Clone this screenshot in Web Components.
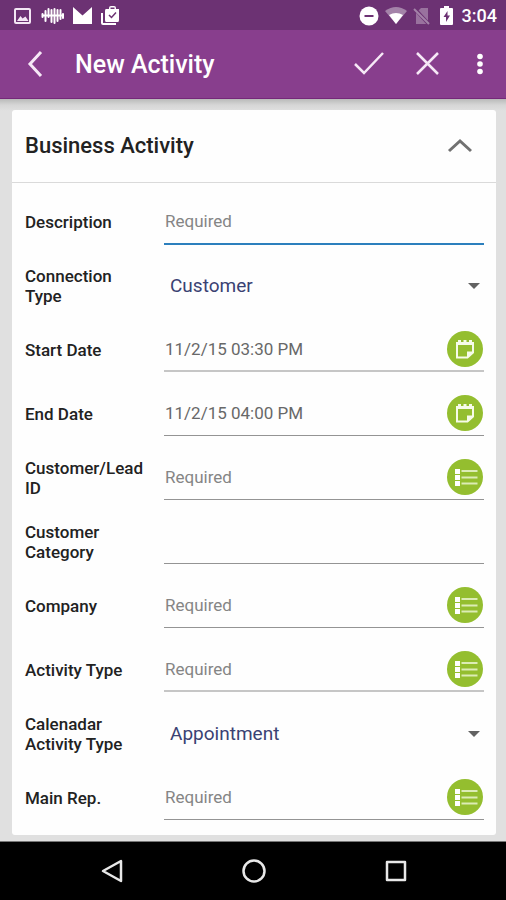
<!DOCTYPE html>
<html lang="en">
<head>
<meta charset="utf-8">
<meta name="viewport" content="width=device-width, initial-scale=1">
<title>New Activity</title>
<style>
  html, body { margin: 0; min-height: 100%; }
  body { background: #e0e0e0; font-family: Roboto, "Liberation Sans", sans-serif; }
</style>
</head>
<body>
<activity-screen>
  <status-bar slot="top">3:04</status-bar>
  <app-bar slot="top">New Activity</app-bar>
  <form-card heading="Business Activity">
    <form-field placeholder="Required" line="active">Description</form-field>
    <select-field value="Customer">Connection Type</select-field>
    <form-field value="11/2/15 03:30 PM" icon="date" line="soft">Start Date</form-field>
    <form-field value="11/2/15 04:00 PM" icon="date">End Date</form-field>
    <form-field placeholder="Required" icon="list">Customer/Lead ID</form-field>
    <form-field>Customer Category</form-field>
    <form-field placeholder="Required" icon="list">Company</form-field>
    <form-field placeholder="Required" icon="list" line="soft">Activity Type</form-field>
    <select-field value="Appointment">Calenadar Activity Type</select-field>
    <form-field placeholder="Required" icon="list">Main Rep.</form-field>
  </form-card>
  <nav-bar slot="bottom"></nav-bar>
</activity-screen>

<script>
class Base extends HTMLElement {
  connectedCallback() {
    if (!this.shadowRoot) this.attachShadow({ mode: "open" }).innerHTML =
      `<style>:host,*{box-sizing:border-box} svg{display:block} button{border:0;padding:0;margin:0;background:none;color:inherit;font:inherit;cursor:pointer;display:grid;place-items:center}</style>` + this.render();
  }
}

customElements.define("activity-screen", class extends Base {
  render() { return `
    <style>
      :host { display: flex; flex-direction: column; min-height: 100vh; }
      main { flex: 1; padding: 11px 10px 6px 12px; background: linear-gradient(#b9bab9, #d6d6d6 6px, #e0e0e0 12px); }
    </style>
    <slot name="top"></slot><main><slot></slot></main><slot name="bottom"></slot>`; }
});

customElements.define("status-bar", class extends Base {
  render() { return `
    <style>
      :host { display: flex; align-items: center; justify-content: space-between; height: 30px; padding: 2px 9px 0 12px; background: #6c3273; color: #fff; font-size: 18px; font-weight: 500; line-height: 28px; }
      div { display: flex; align-items: center; }
      .left { gap: 8px; } .right { gap: 6px; }
    </style>
    <div class="left">
      <svg width="21" height="20" viewBox="0 0 21 20" aria-hidden="true"><rect x="3" y="3" width="15" height="14" rx="1" fill="none" stroke="#f3e6f4" stroke-width="2"/><path d="M5 15l3.500-5 2 2.500 3-2 3 4.500z" fill="#f3e6f4"/></svg>
      <svg width="24" height="20" viewBox="0 0 24 20" aria-hidden="true" stroke="#fff" stroke-linecap="round"><path d="M1.500 8v3M4.500 5v10M7.500 3v8M10.500 4v12M13.500 3v14M16.500 4v11M19.500 4v9M22 8v4" stroke-width="2"/><path d="M2 9.500h20" stroke-width="2"/></svg>
      <svg width="19" height="20" viewBox="0 0 19 20" aria-hidden="true"><path d="M0 1l9.500 8.500L19 1v17H0z" fill="#fff"/></svg>
      <svg width="24" height="20" viewBox="0 0 24 20" aria-hidden="true"><path d="M1 7h2v10h13v2H3q-2 0-2-2z" fill="#fff"/><path d="M6 3h3V2q0-2 2-2h3q2 0 2 2v1h3v11q0 2-1 2H6q-1 0-1-2V5q0-2 1-2zM10.500 3h4V1.500h-4z" fill="#fff" fill-rule="evenodd"/><path d="M9 9l2.500 2.500 4.500-5" fill="none" stroke="#6c3273" stroke-width="1.500"/></svg>
    </div>
    <div class="right">
      <svg width="20" height="20" viewBox="0 0 20 20" aria-hidden="true"><circle cx="10" cy="10" r="9.500" fill="#fff"/><path d="M5.500 10h9" stroke="#6c3273" stroke-width="2"/></svg>
      <svg width="22" height="20" viewBox="0 0 22 20" aria-hidden="true"><path d="M0 5q11-8 22 0L11 18z" fill="#a483a9"/><path d="M4 9q7-4 14 0L11 18z" fill="#fff"/></svg>
      <svg width="18" height="20" viewBox="0 0 18 20" aria-hidden="true"><path d="M3 7l5-5h7v16H3z" fill="#99729e"/><path d="M1 2l15.500 17" stroke="#6c3273" stroke-width="3.500"/><path d="M1 3l15 15" stroke="#a483a9" stroke-width="2"/></svg>
      <svg width="19" height="20" viewBox="0 0 19 20" aria-hidden="true"><path d="M7 0h5v2h3q1 0 1 1v15q0 1-1 1H4q-1 0-1-1V3q0-1 1-1h3z" fill="#fff"/><path d="M10.500 5L6.500 11h2.500v5l4-6.500h-2.500z" fill="#6c3273"/></svg>
      <span><slot></slot></span>
    </div>`; }
});

customElements.define("app-bar", class extends Base {
  render() { return `
    <style>
      :host { display: flex; align-items: center; height: 69px; padding: 2px 6px 0 16px; background: #883e8d; border-bottom: 1px solid #752879; color: #fff; }
      h1 { flex: 1; margin: 0 0 0 19px; font-size: 25px; line-height: 32px; font-weight: 500; }
      button { width: 40px; height: 40px; }
      .actions { display: flex; gap: 19px; }
      .actions button:last-child { margin-left: -7px; }
    </style>
    <button aria-label="Back"><svg width="40" height="40" viewBox="0 0 40 40" fill="none" stroke="#f6e8f6" stroke-width="3"><path d="M25 7L14 19l11 12"/></svg></button>
    <h1><slot></slot></h1>
    <div class="actions">
      <button aria-label="Save"><svg width="40" height="40" viewBox="0 0 40 40" fill="none" stroke="#f6e8f6" stroke-width="2.500"><path d="M6 19l9 9 19-20"/></svg></button>
      <button aria-label="Cancel"><svg width="40" height="40" viewBox="0 0 40 40" fill="none" stroke="#f6e8f6" stroke-width="2.500"><path d="M9 8l21 21M30 8L9 29"/></svg></button>
      <button aria-label="More options"><svg width="40" height="40" viewBox="0 0 40 40" fill="#fff"><circle cx="20" cy="11.500" r="2.800"/><circle cx="20" cy="19" r="2.800"/><circle cx="20" cy="26.500" r="2.800"/></svg></button>
    </div>`; }
});

customElements.define("form-card", class extends Base {
  render() { return `
    <style>
      :host { display: block; background: #fefefe; border-radius: 3px; padding-bottom: 5px; }
      header { display: flex; align-items: center; justify-content: space-between; height: 73px; padding: 0 16px 0 13px; border-bottom: 1px solid #dadada; }
      h2 { margin: 0; font-size: 22px; line-height: 28px; font-weight: 500; color: #222; }
      button { width: 40px; height: 40px; }
      form { padding: 7px 12px 0 13px; }
    </style>
    <header><h2>${this.getAttribute("heading")}</h2>
      <button aria-label="Collapse section" aria-expanded="true"><svg width="40" height="40" viewBox="0 0 40 40" fill="none" stroke="#717171" stroke-width="3"><path d="M9 25l11-10 11 10"/></svg></button>
    </header>
    <form><slot></slot></form>`; }
});

const rowStyle = `
  :host { display: grid; grid-template-columns: 139px minmax(0, 1fr); min-height: 64px; }
  label { align-self: center; padding-right: 16px; font-size: 17px; line-height: 20px; font-weight: 500; color: #222; }
  .field { display: grid; align-items: start; padding-top: 9px; }
  .field > * { grid-area: 1 / 1; }`;

const icons = {
  date: `<svg width="36" height="36" viewBox="0 0 36 36"><path d="M10 12v14.500h10.500l5.500-5V12z" fill="none" stroke="#f6fbe9" stroke-width="2"/><path d="M9 11h18v3H9zM11 9h3v3h-3zM16.500 9h3v3h-3zM22 9h3v3h-3zM20 27v-6.500h7z" fill="#f6fbe9"/></svg>`,
  list: `<svg width="36" height="36" viewBox="0 0 36 36"><path d="M8 10h5v5H8zM8 16h5v5H8zM8 22h5v5H8z" fill="#fff"/><path d="M14.500 12h16M14.500 18.500h16M14.500 24.500h16" stroke="#dcecb5" stroke-width="2"/></svg>`
};

customElements.define("form-field", class extends Base {
  render() {
    const icon = this.getAttribute("icon");
    return `
    <style>${rowStyle}
      input { width: 100%; height: 45px; margin: 0; padding: 0 40px 0 1px; border: 0; border-bottom: 1px solid #949494; border-radius: 0; outline: 0; background: none; font: 400 17px/24px Roboto, "Liberation Sans", sans-serif; color: #686868; }
      input::placeholder { color: #858585; opacity: 1; }
      :host([line="soft"]) input { border-bottom: 2px solid #c6c6c6; }
      :host([line="active"]) input { height: 46px; border-bottom: 2px solid #2c7fbd; }
      button { justify-self: end; width: 36px; height: 36px; margin: 4px 1px 0 0; border-radius: 50%; background: #94be2f; }
    </style>
    <label for="f"><slot></slot></label>
    <div class="field">
      <input id="f" type="text" value="${this.getAttribute("value") || ""}" placeholder="${this.getAttribute("placeholder") || ""}">
      ${icon ? `<button type="button" aria-label="${icon === "date" ? "Pick date" : "Choose from list"}">${icons[icon]}</button>` : ""}
    </div>`; }
});

customElements.define("select-field", class extends Base {
  render() { return `
    <style>${rowStyle}
      select { appearance: none; width: 100%; height: 46px; margin: 0; padding: 0 32px 0 6px; border: 0; outline: 0; background: none; font: 400 19px/24px Roboto, "Liberation Sans", sans-serif; color: #3a4273; }
      svg { justify-self: end; margin: 20px 4px 0 0; pointer-events: none; }
    </style>
    <label for="f"><slot></slot></label>
    <div class="field">
      <select id="f"><option>${this.getAttribute("value")}</option></select>
      <svg width="12" height="6" viewBox="0 0 12 6" aria-hidden="true"><path d="M0 0h12L6 6z" fill="#626262"/></svg>
    </div>`; }
});

customElements.define("nav-bar", class extends Base {
  render() { return `
    <style>
      :host { display: flex; justify-content: center; align-items: center; gap: 102px; height: 59px; padding-left: 2px; background: #000; border-top: 1px solid #777; }
      button { width: 40px; height: 40px; }
    </style>
    <button aria-label="Back"><svg width="40" height="40" viewBox="0 0 40 40" fill="none" stroke="#e8e8e8" stroke-width="2.500" stroke-linejoin="round"><path d="M29 10v20L11 20z"/></svg></button>
    <button aria-label="Home"><svg width="40" height="40" viewBox="0 0 40 40" fill="none" stroke="#e8e8e8" stroke-width="2.500"><circle cx="20" cy="20" r="10.500"/></svg></button>
    <button aria-label="Recent apps"><svg width="40" height="40" viewBox="0 0 40 40" fill="none" stroke="#e8e8e8" stroke-width="2.500" stroke-linejoin="round"><rect x="11" y="11" width="18" height="18"/></svg></button>`; }
});
</script>
</body>
</html>
